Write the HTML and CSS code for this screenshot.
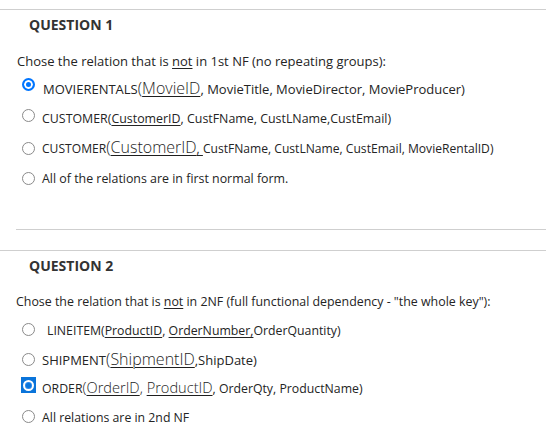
FILE: index.html
```html
<!DOCTYPE html>
<html>
<head>
<meta charset="utf-8">
<link rel="stylesheet" href="styles.css">
</head>
<body>
<div class="rule rule-full rule-top"></div>
<section class="question">
  <h2 class="qhead">QUESTION 1</h2>
  <p class="qtext q1">Chose the relation that is <u>not</u> in 1st NF (no repeating groups):</p>
  <div class="options">
    <div class="opt"><span class="radio checked r-4"></span><span class="label size-13 lead1">MOVIERENTALS<span class="big">(<u>MovieID</u></span>, MovieTitle, MovieDirector, MovieProducer)</span></div>
    <div class="opt"><span class="radio r-5"></span><span class="label">CUSTOMER(<u>CustomerID</u>, CustFName, CustLName,CustEmail)</span></div>
    <div class="opt"><span class="radio r-8"></span><span class="label size-12">CUSTOMER<span class="big">(<u>CustomerID</u></span><u>, </u>CustFName, CustLName, CustEmail, MovieRentalID)</span></div>
    <div class="opt"><span class="radio r-8"></span><span class="label">All of the relations are in first normal form.</span></div>
  </div>
</section>
<div class="rule rule-inset"></div>
<div class="rule rule-full rule-sep"></div>
<section class="question">
  <h2 class="qhead">QUESTION 2</h2>
  <p class="qtext q2">Chose the relation that is <u>not</u> in 2NF (full functional dependency - "the whole key"):</p>
  <div class="options options-2">
    <div class="opt"><span class="radio r-7"></span><span class="label indent">LINEITEM(<u>ProductID</u>, <u>OrderNumber,</u>OrderQuantity)</span></div>
    <div class="opt"><span class="radio r-8"></span><span class="label size-13">SHIPMENT<span class="big">(<u>ShipmentID</u></span>,ShipDate)</span></div>
    <div class="opt"><span class="radio-focus"><span class="ring"></span></span><span class="label focus-label">ORDER<span class="big big-sm">(<u>OrderID</u>, <u>ProductID</u></span>, OrderQty, ProductName)</span></div>
    <div class="opt"><span class="radio r-7"></span><span class="label">All relations are in 2nd NF</span></div>
  </div>
</section>
</body>
</html>
```

FILE: styles.css
```css
html, body {
  margin: 0;
  padding: 0;
  background: #ffffff;
}

body {
  width: 546px;
  height: 446px;
  overflow: hidden;
  font-family: "Open Sans", "Noto Sans", sans-serif;
  color: #242424;
}

.rule {
  height: 1px;
  background: #cfcfcf;
}

.rule-top {
  margin-top: 9px;
}

.rule-inset {
  margin-left: 16px;
  margin-top: 35px;
}

.rule-sep {
  margin-top: 20px;
}

.qhead {
  margin: 5px 0 0 0;
  padding-left: 29px;
  font-size: 14px;
  line-height: 20px;
  font-weight: 700;
  color: #333333;
}

.qtext {
  margin: 16px 0 0 0;
  font-size: 13px;
  line-height: 20px;
}

.qtext.q1 {
  padding-left: 17px;
}

.qtext.q2 {
  padding-left: 16px;
  font-size: 12.4px;
}

.options {
  margin-top: 3px;
  display: flex;
  flex-direction: column;
}

.options-2 {
  margin-top: 4px;
}

.opt {
  display: flex;
  align-items: flex-start;
  height: 30px;
  padding-left: 22px;
}

.options-2 .opt {
  height: 29px;
}

.label {
  font-size: 12.4px;
  line-height: 30px;
  margin-left: 7px;
  white-space: nowrap;
}

.options-2 .label {
  font-size: 12.3px;
}

.label.size-13,
.options-2 .label.size-13 {
  font-size: 13px;
}

.label.size-12 {
  font-size: 12.1px;
}

.lead1 {
  margin-left: 8px;
}

.indent {
  margin-left: 12px;
}

.big,
.options-2 .big {
  font-size: 16px;
  font-stretch: 88%;
  font-weight: 360;
  line-height: 20px;
  color: #1e1e1e;
}

.options-2 .big.big-sm {
  font-size: 14.6px;
}

u {
  text-decoration-thickness: 1px;
  text-underline-offset: 2px;
}

.radio {
  box-sizing: border-box;
  flex: none;
  width: 13px;
  height: 13px;
  border-radius: 50%;
  border: 1px solid #8a8a8a;
  background: #ffffff;
}

.radio.checked {
  border: 2px solid #0075ff;
  background: #0075ff;
  box-shadow: inset 0 0 0 2px #ffffff;
}

.r-4 { margin-top: 4px; }
.r-5 { margin-top: 5px; }
.r-7 { margin-top: 7px; }
.r-8 { margin-top: 8px; }

.radio-focus {
  flex: none;
  margin-top: 3px;
  margin-left: -1px;
  width: 15px;
  height: 16px;
  background: #0a74da;
  display: flex;
  align-items: center;
  justify-content: center;
}

.ring {
  box-sizing: border-box;
  width: 11px;
  height: 11px;
  border-radius: 50%;
  border: 2px solid #ffffff;
  background: #0a74da;
  box-shadow: inset 0 0 0 1px #2b8cf0;
}

.focus-label {
  margin-left: 6px;
}
```
